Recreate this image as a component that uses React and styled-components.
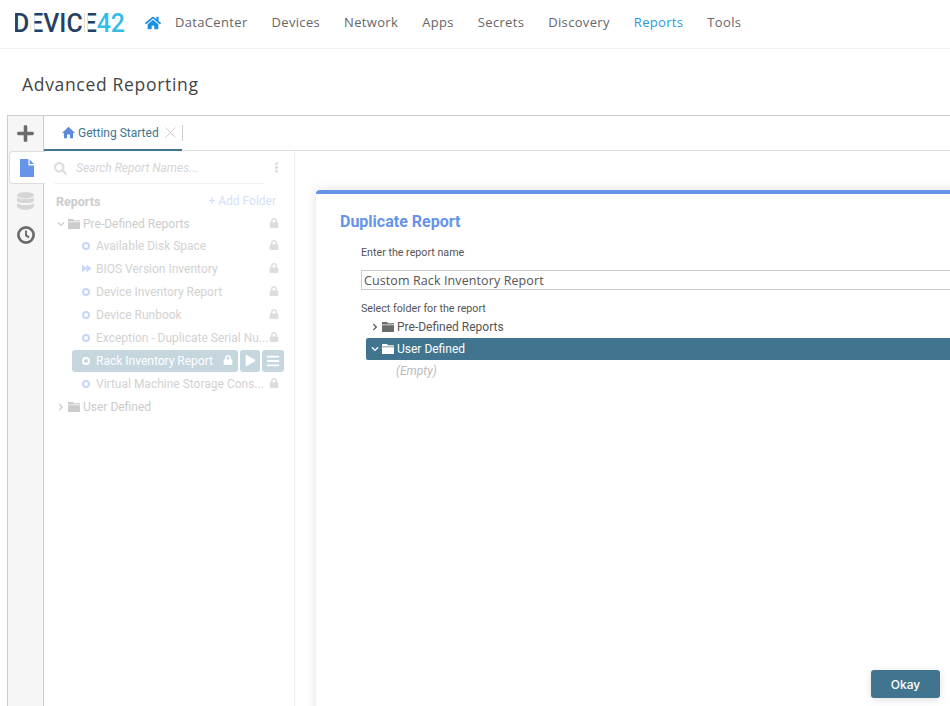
import React from "react"
import styled, { createGlobalStyle } from "styled-components"
import { X } from "lucide-react"
import {
  FaHome,
  FaPlus,
  FaSearch,
  FaEllipsisV,
  FaLock,
  FaChevronRight,
  FaChevronDown,
  FaPlay,
  FaBars,
  FaForward
} from "react-icons/fa"

const navItems = [
  "DataCenter",
  "Devices",
  "Network",
  "Apps",
  "Secrets",
  "Discovery",
  "Reports",
  "Tools"
]

const reports = [
  { name: "Available Disk Space" },
  { name: "BIOS Version Inventory", icon: "forward" },
  { name: "Device Inventory Report" },
  { name: "Device Runbook" },
  { name: "Exception - Duplicate Serial Nu..." },
  { name: "Rack Inventory Report", active: true },
  { name: "Virtual Machine Storage Cons..." }
]

const LogoMark = () => (
  <svg width="110" height="24" viewBox="0 0 110 24">
    <text
      x="-2"
      y="20"
      fontFamily="Roboto, sans-serif"
      fontWeight="500"
      fontSize="26"
      fill="#26405f"
      textLength="112"
      lengthAdjust="spacingAndGlyphs"
    >
      DEVICE<tspan fill="#35bde8">42</tspan>
    </text>
    <rect x="15.8" y="0" width="3.6" height="22" fill="#fff" />
    <rect x="69.4" y="0" width="3.4" height="22" fill="#fff" />
  </svg>
)

const HouseIcon = () => (
  <svg width="13" height="13" viewBox="0 0 16 16" fill="#5b8ad6">
    <path d="M8 1 16 8.6H13.6V15H9.8V10.4H6.2V15H2.4V8.6H0Z" />
  </svg>
)

const FileIcon = () => (
  <svg width="14" height="18" viewBox="0 0 14 18" fill="#6594ea">
    <path d="M0 0H8.4V6.4H14V18H0Z" />
    <path d="M9.6 0.4 14 5H9.6Z" />
  </svg>
)

const DatabaseIcon = () => (
  <svg width="17" height="18" viewBox="0 0 17 18" fill="#d6d6d6">
    <ellipse cx="8.5" cy="3.2" rx="8.5" ry="3.2" />
    <path d="M0 5.4C2 7.6 15 7.6 17 5.4V9C15 11.8 2 11.8 0 9Z" />
    <path d="M0 11.2C2 13.6 15 13.6 17 11.2V14.8C15 18.8 2 18.8 0 14.8Z" />
  </svg>
)

const ClockIcon = () => (
  <svg width="18" height="18" viewBox="0 0 18 18" fill="none" stroke="#6b6b6b">
    <circle cx="9" cy="9" r="7.6" strokeWidth="2.7" />
    <path d="M9 4.6V9.4L12 11.4" strokeWidth="1.9" />
  </svg>
)

const FolderIcon = ({ color }) => (
  <FolderSvg width="12" height="10" viewBox="0 0 12 10" fill={color}>
    <path d="M0 0H5L6 1.2H12V2.4H0Z" />
    <rect x="0" y="3.2" width="12" height="6.8" />
  </FolderSvg>
)

const App = () => {
  return (
    <Page>
      <GlobalStyle />
      <Header>
        <LogoMark />
        <HomeLink>
          <FaHome size={16} />
        </HomeLink>
        <Nav>
          {navItems.map((item) => (
            <NavItem key={item} $active={item === "Reports"}>
              {item}
            </NavItem>
          ))}
        </Nav>
      </Header>
      <TitleBar>
        <Title>Advanced Reporting</Title>
      </TitleBar>
      <Frame>
        <Rail>
          <RailButton>
            <FaPlus size={19} color="#6b6b6b" />
          </RailButton>
          <RailTab>
            <FileIcon />
          </RailTab>
          <RailButton $short>
            <DatabaseIcon />
          </RailButton>
          <RailButton $short>
            <ClockIcon />
          </RailButton>
        </Rail>
        <Workspace>
          <TabBar>
            <Tab>
              <HouseIcon />
              <TabLabel>Getting Started</TabLabel>
              <TabClose size={19} color="#c4c4c4" strokeWidth={1} />
            </Tab>
            <TabDivider />
          </TabBar>
          <Panes>
            <Sidebar>
              <SearchRow>
                <SearchField>
                  <FaSearch size={13} color="#ddd" />
                  <SearchText>Search Report Names...</SearchText>
                </SearchField>
                <FaEllipsisV size={11} color="#ddd" />
              </SearchRow>
              <SectionRow>
                <SectionTitle>Reports</SectionTitle>
                <AddFolder>+ Add Folder</AddFolder>
              </SectionRow>
              <FolderRow>
                <FaChevronDown size={8} color="#ccc" />
                <FolderIcon color="#ccc" />
                <RowName>Pre-Defined Reports</RowName>
                <LockIcon size={10} color="#ddd" />
              </FolderRow>
              {reports.map((report) => (
                <ReportLine key={report.name}>
                  <ReportRow $active={report.active}>
                    {report.icon === "forward" ? (
                      <ForwardIcon size={9} color="#c6d6f6" />
                    ) : (
                      <Ring $active={report.active} />
                    )}
                    <RowName>{report.name}</RowName>
                    <LockIcon size={10} color={report.active ? "#fff" : "#ddd"} />
                  </ReportRow>
                  {report.active && (
                    <>
                      <RowAction>
                        <FaPlay size={11} color="#fff" />
                      </RowAction>
                      <RowAction $wide>
                        <FaBars size={14} color="#fff" />
                      </RowAction>
                    </>
                  )}
                </ReportLine>
              ))}
              <ClosedFolderRow>
                <FaChevronRight size={8} color="#ccc" />
                <FolderIcon color="#ccc" />
                <RowName>User Defined</RowName>
              </ClosedFolderRow>
            </Sidebar>
            <Main>
              <Modal>
                <ModalTitle>Duplicate Report</ModalTitle>
                <ModalBody>
                  <FieldLabel>Enter the report name</FieldLabel>
                  <NameInput>Custom Rack Inventory Report</NameInput>
                  <FolderLabel>Select folder for the report</FolderLabel>
                  <PickerRow>
                    <FaChevronRight size={8} color="#555" />
                    <FolderIcon color="#6b6b6b" />
                    <span>Pre-Defined Reports</span>
                  </PickerRow>
                  <PickerRow $selected>
                    <FaChevronDown size={8} color="#fff" />
                    <FolderIcon color="#fff" />
                    <span>User Defined</span>
                  </PickerRow>
                  <EmptyNote>(Empty)</EmptyNote>
                </ModalBody>
                <ModalFooter>
                  <OkayButton>Okay</OkayButton>
                </ModalFooter>
              </Modal>
            </Main>
          </Panes>
        </Workspace>
      </Frame>
    </Page>
  )
}

export default App

const GlobalStyle = createGlobalStyle`
  html, body {
    margin: 0;
    height: 100%;
    overflow: hidden;
    background: #fff;
    font-family: "Roboto", "Liberation Sans", sans-serif;
  }
`

const Page = styled.div`
  height: 706px;
  display: flex;
  flex-direction: column;
  overflow: hidden;
`

const Header = styled.header`
  height: 48px;
  flex: none;
  box-sizing: content-box;
  display: flex;
  align-items: center;
  padding-left: 15px;
  border-bottom: 1px solid #eee;
`

const HomeLink = styled.span`
  display: flex;
  margin-left: 20px;
  margin-right: 14px;
  margin-bottom: 2px;
  color: #1c8fe3;
`

const Nav = styled.nav`
  display: flex;
  gap: 24px;
  margin-bottom: 4px;
`

const NavItem = styled.span`
  font-family: "Open Sans", sans-serif;
  font-size: 13px;
  letter-spacing: 0.33px;
  color: ${(props) => (props.$active ? "#2b99e0" : "#666")};
`

const TitleBar = styled.div`
  height: 66px;
  flex: none;
  display: flex;
  align-items: center;
  padding: 4px 0 0 22px;
  box-sizing: border-box;
`

const Title = styled.h1`
  margin: 0;
  font-family: "Open Sans", sans-serif;
  font-size: 17.5px;
  font-weight: 400;
  letter-spacing: 0.68px;
  color: #444;
`

const Frame = styled.div`
  flex: 1;
  min-height: 0;
  margin-left: 7px;
  display: flex;
  border-top: 1px solid #ccc;
  border-left: 1px solid #ccc;
`

const Rail = styled.div`
  width: 35px;
  flex: none;
  background: #f6f6f6;
  border-right: 1px solid #ccc;
  display: flex;
  flex-direction: column;
`

const RailButton = styled.div`
  height: ${(props) => (props.$short ? "34px" : "35px")};
  display: flex;
  align-items: center;
  justify-content: center;
`

const RailTab = styled.div`
  height: 31px;
  width: 33px;
  padding-right: 2px;
  margin-left: 1px;
  background: #fff;
  border: 1px solid #ddd;
  border-right: none;
  border-radius: 4px 0 0 4px;
  display: flex;
  align-items: center;
  justify-content: center;
  box-sizing: content-box;
  position: relative;
  z-index: 1;
`

const Workspace = styled.div`
  flex: 1;
  min-width: 0;
  display: flex;
  flex-direction: column;
`

const TabBar = styled.div`
  height: 35px;
  flex: none;
  box-sizing: border-box;
  display: flex;
  align-items: center;
  border-bottom: 1px solid #ddd;
`

const Tab = styled.div`
  width: 138px;
  height: 35px;
  box-sizing: border-box;
  padding: 0 0 0 18px;
  display: flex;
  align-items: center;
  gap: 3px;
  border-bottom: 2px solid #41758f;
`

const TabLabel = styled.span`
  font-size: 12px;
  color: #41758f;
  padding-top: 1px;
  white-space: nowrap;
`

const TabClose = styled(X)`
  flex: none;
  margin-left: -1px;
`

const TabDivider = styled.span`
  width: 1px;
  height: 16px;
  background: #ccc;
`

const Panes = styled.div`
  flex: 1;
  min-height: 0;
  display: flex;
`

const Sidebar = styled.aside`
  width: 251px;
  flex: none;
  box-sizing: border-box;
  border-right: 1px solid #eee;
  padding: 0 10px;
`

const SearchRow = styled.div`
  height: 33px;
  display: flex;
  align-items: center;
  justify-content: space-between;
  padding-right: 2px;
`

const SearchField = styled.div`
  width: 210px;
  height: 33px;
  box-sizing: border-box;
  padding-top: 2px;
  border-bottom: 1px solid #f2f2f2;
  display: flex;
  align-items: center;
`

const SearchText = styled.span`
  margin-left: 9px;
  font-size: 12px;
  font-style: italic;
  color: #d5d5d5;
  white-space: nowrap;
`

const SectionRow = styled.div`
  height: 35px;
  width: 220px;
  margin-left: 2px;
  display: flex;
  align-items: center;
  justify-content: space-between;
`

const SectionTitle = styled.span`
  font-size: 12.5px;
  font-weight: 700;
  color: #ccc;
`

const AddFolder = styled.span`
  font-size: 12px;
  color: #d5e1f8;
  margin-bottom: 2px;
`

const FolderRow = styled.div`
  height: 22px;
  width: 222px;
  margin: -6px 0 -1px 3px;
  display: flex;
  align-items: center;
  gap: 3px;
`

const ClosedFolderRow = styled(FolderRow)`
  margin: 1px 0 0 3px;
`

const FolderSvg = styled.svg`
  flex: none;
`

const LockIcon = styled(FaLock)`
  flex: none;
  margin-bottom: 2px;
`

const RowName = styled.span`
  flex: 1;
  min-width: 0;
  font-size: 12px;
  color: #ccc;
  white-space: nowrap;
`

const ReportLine = styled.div`
  height: 23px;
  display: flex;
  align-items: center;
  gap: 2px;
  margin-left: 18px;
`

const ReportRow = styled.div`
  width: ${(props) => (props.$active ? "166px" : "207px")};
  height: 22px;
  box-sizing: border-box;
  padding: 0 ${(props) => (props.$active ? "5px" : "0")} 0 10px;
  display: flex;
  align-items: center;
  border-radius: 3px;
  background: ${(props) => (props.$active ? "#c5d6df" : "transparent")};

  ${RowName} {
    margin-left: 6px;
    color: ${(props) => (props.$active ? "#fff" : "#d2d2d2")};
  }
`

const Ring = styled.span`
  width: 8px;
  height: 8px;
  flex: none;
  box-sizing: border-box;
  border-radius: 50%;
  border: 2px solid ${(props) => (props.$active ? "#fff" : "#c6d6f6")};
`

const ForwardIcon = styled(FaForward)`
  flex: none;
  margin-right: -1px;
`

const RowAction = styled.span`
  width: ${(props) => (props.$wide ? "22px" : "20px")};
  height: 22px;
  border-radius: 3px;
  background: #c5d6df;
  display: flex;
  align-items: center;
  justify-content: center;
`

const Main = styled.main`
  flex: 1;
  min-width: 0;
  position: relative;
  overflow: hidden;
`

const Modal = styled.section`
  position: absolute;
  left: 21px;
  right: -60px;
  top: 39px;
  bottom: -20px;
  box-sizing: border-box;
  background: #fff;
  border-top: 4px solid #6594ea;
  border-radius: 4px 4px 0 0;
  box-shadow: 0 0 12px rgba(0, 0, 0, 0.12);
  display: flex;
  flex-direction: column;
`

const ModalTitle = styled.h2`
  margin: 18px 0 0 24px;
  font-size: 16px;
  line-height: 20px;
  font-weight: 700;
  color: #6594ea;
`

const ModalBody = styled.div`
  flex: 1;
  padding: 14px 0 0 45px;
`

const FieldLabel = styled.div`
  font-size: 10.7px;
  line-height: 14px;
  color: #555;
`

const NameInput = styled.div`
  margin-top: 10px;
  height: 20px;
  box-sizing: border-box;
  border: 1px solid #ccc;
  padding-left: 2px;
  font-family: "Open Sans", sans-serif;
  font-size: 12.5px;
  line-height: 19px;
  letter-spacing: 0.1px;
  color: #555;
`

const FolderLabel = styled(FieldLabel)`
  margin-top: 12px;
`

const PickerRow = styled.div`
  height: 22px;
  margin-left: 5px;
  padding-left: 5px;
  box-sizing: border-box;
  display: flex;
  align-items: center;
  gap: 3px;
  font-size: 12px;
  border-radius: 2px 0 0 2px;
  color: ${(props) => (props.$selected ? "#fff" : "#555")};
  background: ${(props) => (props.$selected ? "#41758f" : "transparent")};
`

const EmptyNote = styled.div`
  margin-left: 35px;
  height: 22px;
  line-height: 22px;
  font-size: 12px;
  font-style: italic;
  color: #bbb;
`

const ModalFooter = styled.div`
  display: flex;
  justify-content: flex-end;
  padding: 0 70px 28px 0;
`

const OkayButton = styled.button`
  width: 69px;
  height: 28px;
  border: none;
  border-radius: 3px;
  background: #41758f;
  box-shadow: 0 2px 8px rgba(0, 0, 0, 0.12);
  color: #fff;
  font-family: "Inter", sans-serif;
  font-size: 12px;
  font-weight: 500;
`
